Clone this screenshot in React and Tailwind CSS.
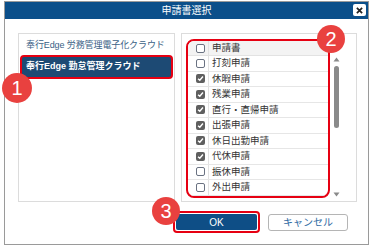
import React from 'react';

const font = { fontFamily: "'Liberation Sans','Noto Sans CJK JP',sans-serif" };

const rows = [
  { label: '打刻申請', checked: false },
  { label: '休暇申請', checked: true },
  { label: '残業申請', checked: true },
  { label: '直行・直帰申請', checked: true },
  { label: '出張申請', checked: true },
  { label: '休日出勤申請', checked: true },
  { label: '代休申請', checked: true },
  { label: '振休申請', checked: false },
  { label: '外出申請', checked: false },
];

function Check({ checked }) {
  if (!checked) {
    return <span className="block w-[9px] h-[9px] border border-gray-500 rounded-[2px] bg-white" />;
  }
  return (
    <span className="flex items-center justify-center w-[9px] h-[9px] rounded-[2px] bg-[#5f5f5f]">
      <svg width="7" height="7" viewBox="0 0 8 8">
        <path d="M1.2 4.2 L3.2 6 L6.8 1.8" stroke="white" strokeWidth="1.6" fill="none" />
      </svg>
    </span>
  );
}

function Badge({ n, className }) {
  return (
    <div
      className={
        'absolute rounded-full bg-[#e9413f] text-white flex items-center justify-center text-[20px] leading-none ' +
        className
      }
    >
      {n}
    </div>
  );
}

export default function App() {
  return (
    <div className="relative w-[370px] h-[246px] bg-white overflow-hidden" style={font}>
      <div className="ml-[4px] mt-[1px] w-[365px] h-[244px] border border-[#9a9a9a] bg-white flex flex-col">
        {/* Title bar */}
        <div className="relative h-[17px] bg-[#0b4f8a] flex items-center justify-center">
          <span className="text-white text-[10px] leading-none">申請書選択</span>
          <div className="absolute right-[2px] top-[2px] w-[13px] h-[12px] bg-white rounded-[2px] flex items-center justify-center">
            <svg width="7" height="7" viewBox="0 0 8 8">
              <path d="M1 1 L7 7 M7 1 L1 7" stroke="#222" strokeWidth="2" />
            </svg>
          </div>
        </div>

        {/* Panels */}
        <div className="flex gap-[6px] pl-[13px] pt-[14px]">
          <div className="w-[157px] h-[169px] border border-[#dcdcdc] bg-white pt-[3px] px-[1px]">
            <div className="h-[17px] pl-[6px] flex items-center text-[9px] text-[#3a5f86] whitespace-nowrap tracking-[-0.1px]">
              奉行Edge 労務管理電子化クラウド
            </div>
            <div className="mt-[1px] h-[24px] border-2 border-[#e60012] rounded-[4px] bg-[#1d4a74] pl-[4px] flex items-center text-[9px] font-bold text-white whitespace-nowrap">
              奉行Edge 勤怠管理クラウド
            </div>
          </div>

          <div className="relative w-[176px] h-[169px] border border-[#dcdcdc] bg-white">
            <div className="absolute left-[4px] top-[5px] w-[144px] h-[159px] border-2 border-[#e60012] rounded-[8px] overflow-hidden">
              <div className="h-[15px] flex items-center bg-[#f3f3f3] border-b border-[#e2e2e2]">
                <div className="w-[20px] flex justify-center pl-[4px]">
                  <Check checked={false} />
                </div>
                <div className="h-full border-l border-[#e2e2e2] pl-[3px] flex items-center text-[9.5px] text-[#333]">
                  申請書
                </div>
              </div>
              {rows.map((r) => (
                <div key={r.label} className="h-[15.5px] flex items-center border-b border-[#e6e6e6]">
                  <div className="w-[20px] flex justify-center pl-[4px]">
                    <Check checked={r.checked} />
                  </div>
                  <div className="h-full border-l border-[#e2e2e2] pl-[3px] flex items-center text-[9.5px] text-[#333]">
                    {r.label}
                  </div>
                </div>
              ))}
            </div>

            {/* Scrollbar */}
            <div className="absolute left-[150px] top-[23px] w-[8px] h-[140px] flex flex-col items-center">
              <svg width="7" height="5" viewBox="0 0 7 5">
                <path d="M0.5 4.5 L3.5 0.5 L6.5 4.5 Z" fill="#8a8a8a" />
              </svg>
              <div className="mt-[4px] w-[5px] h-[62px] rounded-full bg-[#8a8a8a]" />
              <div className="flex-1" />
              <svg width="7" height="5" viewBox="0 0 7 5">
                <path d="M0.5 0.5 L3.5 4.5 L6.5 0.5 Z" fill="#8a8a8a" />
              </svg>
            </div>
          </div>
        </div>

        {/* Buttons */}
        <div className="flex items-center pl-[168px] pt-[9px] gap-[8px]">
          <div className="w-[87px] h-[22px] border-2 border-[#e60012] rounded-[4px] p-[1px]">
            <div className="w-full h-full bg-[#0e4e86] rounded-[2px] flex items-center justify-center text-white text-[10px]">
              OK
            </div>
          </div>
          <div className="w-[80px] h-[17px] border border-[#b5b5b5] rounded-[3px] bg-white flex items-center justify-center text-[10px] text-[#2e6aa3]">
            キャンセル
          </div>
        </div>
      </div>

      <Badge n="1" className="w-[30px] h-[30px] left-[2px] top-[73px]" />
      <Badge n="2" className="w-[28px] h-[28px] left-[317px] top-[25px]" />
      <Badge n="3" className="w-[28px] h-[28px] left-[152px] top-[197px]" />
    </div>
  );
}
